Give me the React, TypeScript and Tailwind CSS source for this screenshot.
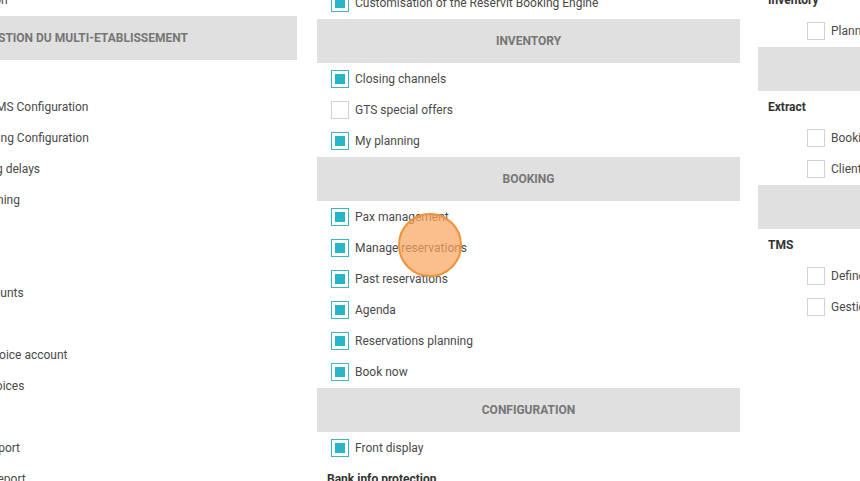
type Entry =
  | { kind: 'header'; text: string }
  | { kind: 'label'; text: string }
  | { kind: 'item'; text: string; checked?: boolean; nested?: boolean };

// left column: multi-property rights (scrolled partly out of view)
const leftColumn: Entry[] = [
  { kind: 'item', text: 'Description', checked: true, nested: true },
  { kind: 'header', text: 'Gestion du multi-etablissement' },
  { kind: 'label', text: 'Settings' },
  { kind: 'item', text: 'Default PMS Configuration', checked: true, nested: true },
  { kind: 'item', text: 'Spa Booking Configuration', checked: true, nested: true },
  { kind: 'item', text: 'Cancelling delays', checked: true, nested: true },
  { kind: 'item', text: 'Rate planning', checked: true, nested: true },
  { kind: 'label', text: 'Accounts' },
  { kind: 'item', text: 'Users', checked: true, nested: true },
  { kind: 'item', text: 'User accounts', checked: true, nested: true },
  { kind: 'label', text: 'Invoices' },
  { kind: 'item', text: 'Delete invoice account', checked: true, nested: true },
  { kind: 'item', text: 'Client invoices', checked: true, nested: true },
  { kind: 'label', text: 'Reports' },
  { kind: 'item', text: 'Weekly report', checked: true, nested: true },
  { kind: 'item', text: 'Booking report', checked: true, nested: true },
];

const middleColumn: Entry[] = [
  { kind: 'item', text: 'Customisation of the Reservit Booking Engine', checked: true },
  { kind: 'header', text: 'Inventory' },
  { kind: 'item', text: 'Closing channels', checked: true },
  { kind: 'item', text: 'GTS special offers' },
  { kind: 'item', text: 'My planning', checked: true },
  { kind: 'header', text: 'Booking' },
  { kind: 'item', text: 'Pax management', checked: true },
  { kind: 'item', text: 'Manage reservations', checked: true },
  { kind: 'item', text: 'Past reservations', checked: true },
  { kind: 'item', text: 'Agenda', checked: true },
  { kind: 'item', text: 'Reservations planning', checked: true },
  { kind: 'item', text: 'Book now', checked: true },
  { kind: 'header', text: 'Configuration' },
  { kind: 'item', text: 'Front display', checked: true },
  { kind: 'label', text: 'Bank info protection' },
  { kind: 'item', text: 'Card details', nested: true },
];

const rightColumn: Entry[] = [
  { kind: 'label', text: 'Inventory' },
  { kind: 'item', text: 'Planning', nested: true },
  { kind: 'header', text: 'Statistics' },
  { kind: 'label', text: 'Extract' },
  { kind: 'item', text: 'Bookings', nested: true },
  { kind: 'item', text: 'Clients', nested: true },
  { kind: 'header', text: 'Tools' },
  { kind: 'label', text: 'TMS' },
  { kind: 'item', text: 'Define the tasks', nested: true },
  { kind: 'item', text: 'Gestion des tâches', nested: true },
];

function Checkbox({ checked }: { checked?: boolean }) {
  return (
    <span
      className={`flex h-[18px] w-[18px] shrink-0 items-center justify-center border bg-white ${
        checked ? 'border-[#3db7c4]' : 'border-[#d2d2d2]'
      }`}
    >
      {checked && <span className="h-[10px] w-[10px] bg-[#27b5c7]" />}
    </span>
  );
}

function Row({ entry }: { entry: Entry }) {
  if (entry.kind === 'header') {
    return (
      <div className="mt-[1px] flex h-[44px] items-center justify-center bg-[#e0e0e0] text-[12px] font-bold uppercase text-[#767676]">
        {entry.text}
      </div>
    );
  }
  if (entry.kind === 'label') {
    return (
      <div className="flex h-[31px] items-center whitespace-nowrap pl-[10px] text-[12px] font-bold text-[#333]">
        {entry.text}
      </div>
    );
  }
  return (
    <div
      className={`flex h-[31px] items-center gap-[6px] whitespace-nowrap text-[12px] text-[#4a4a4a] ${
        entry.nested ? 'pl-[49px]' : 'pl-[14px]'
      }`}
    >
      <Checkbox checked={entry.checked} />
      <span>{entry.text}</span>
    </div>
  );
}

function Column({ entries, className }: { entries: Entry[]; className: string }) {
  return (
    <div className={`flex w-[423px] shrink-0 flex-col ${className}`}>
      {entries.map((e, i) => (
        <Row key={i} entry={e} />
      ))}
    </div>
  );
}

export default function App() {
  return (
    <div className="relative h-[481px] w-[860px] overflow-hidden bg-white font-['Roboto',sans-serif]">
      <div className="-ml-[126px] flex items-start">
        <Column entries={leftColumn} className="-mt-[16px] mr-[20px]" />
        <Column entries={middleColumn} className="-mt-[13px] mr-[18px]" />
        <Column entries={rightColumn} className="-mt-[16px]" />
      </div>

      {/* click marker */}
      <div className="pointer-events-none absolute left-[398px] top-[213px] h-[64px] w-[64px] rounded-full border-2 border-[#f0923a] bg-[#f9a45c]/70" />
    </div>
  );
}
